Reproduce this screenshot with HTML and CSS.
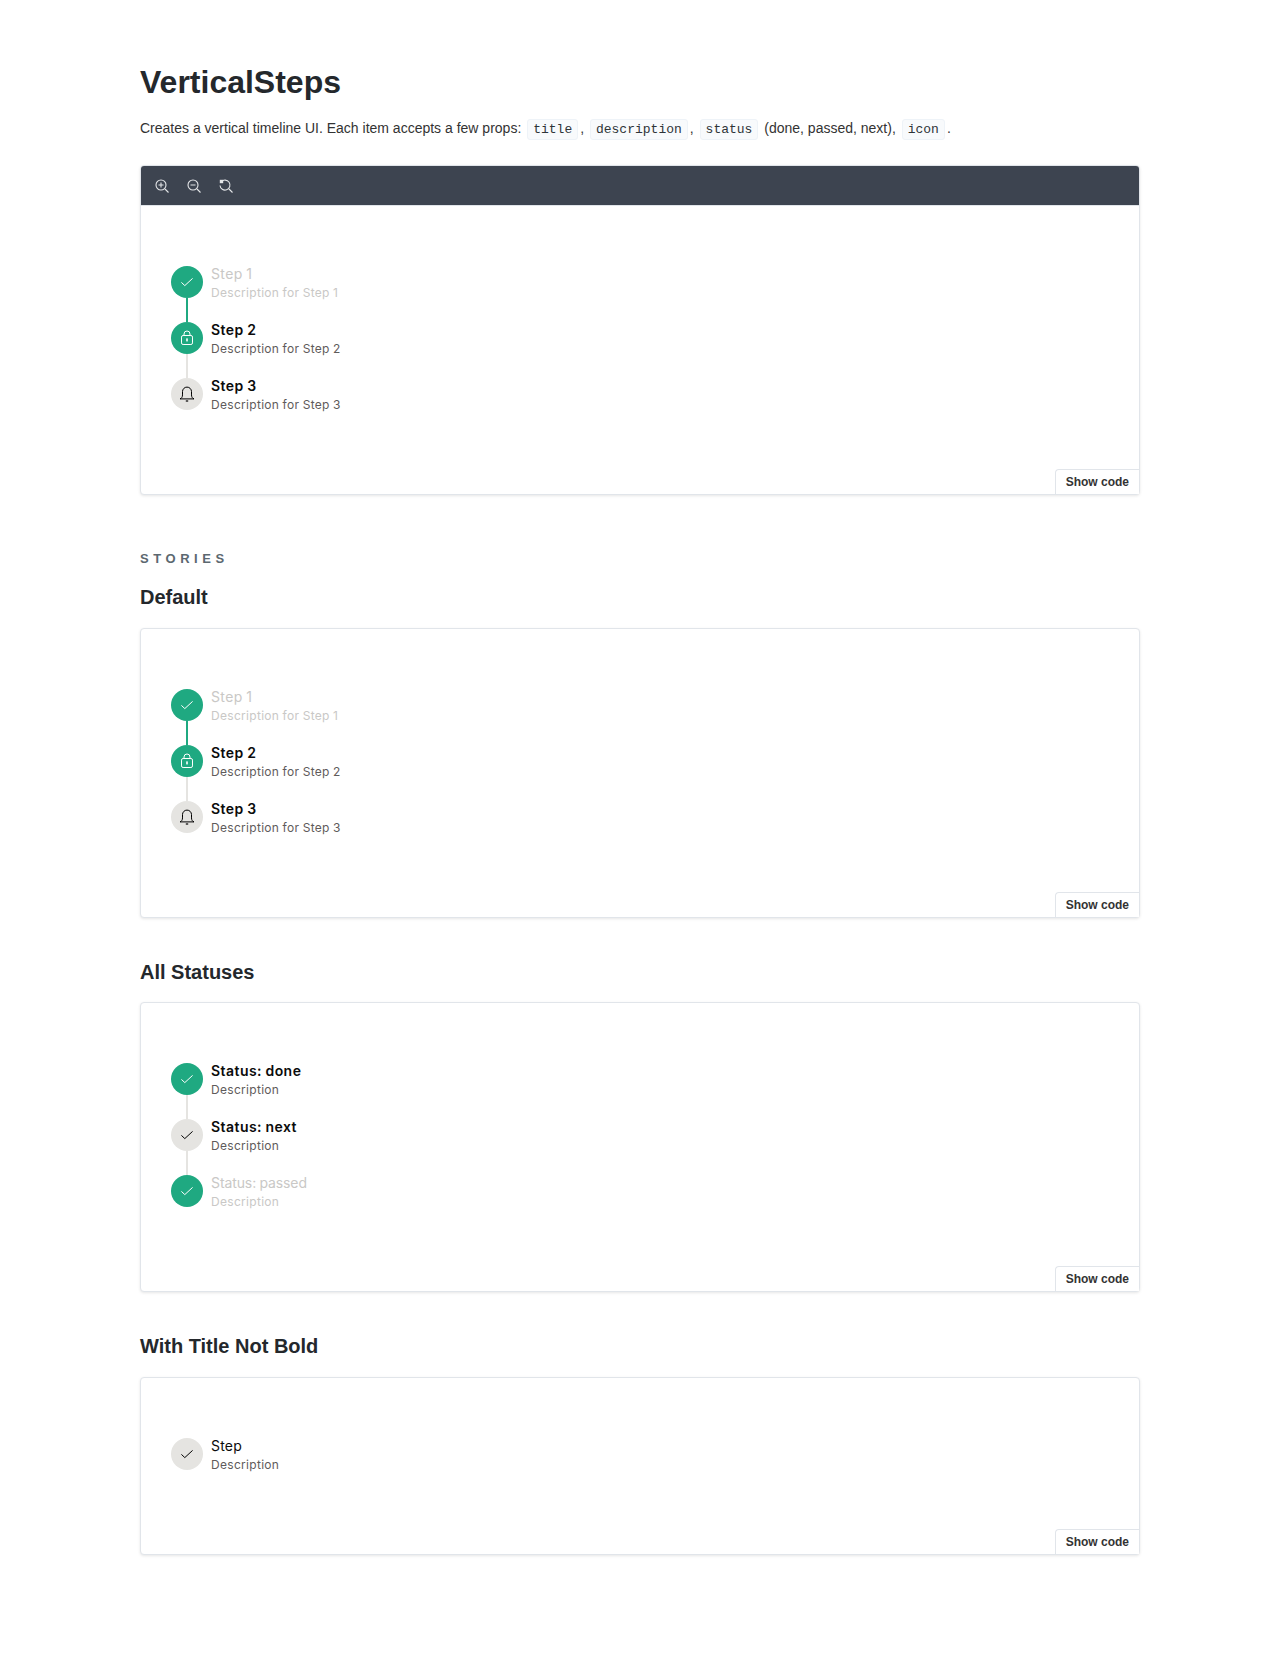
FILE: index.html
```html
<!DOCTYPE html>
<html lang="en">
<head>
    <meta charset="UTF-8">
    <title>VerticalSteps</title>
    <link rel="stylesheet" href="styles.css">
</head>
<body>
    <svg class="icon-defs" width="0" height="0" aria-hidden="true">
        <symbol id="i-check" viewBox="0 0 16 16"><path d="M2.4 8.4l3.4 3.2L13.6 4.4" fill="none" stroke="currentColor" stroke-width="1"/></symbol>
        <symbol id="i-lock" viewBox="0 0 16 16"><g fill="none" stroke="currentColor" stroke-width="1"><rect x="2.5" y="5.5" width="11" height="9" rx="1.6"/><path d="M5 5.5V4a3 3 0 0 1 6 0v1.5"/></g><rect x="7.2" y="8.4" width="1.6" height="3" fill="currentColor"/></symbol>
        <symbol id="i-bell" viewBox="0 0 16 16"><path d="M1 12.9c1.6-.7 2.5-1.9 2.5-4V5.6a4.5 4.5 0 0 1 9 0v3.3c0 2.1.9 3.3 2.5 4z" fill="none" stroke="currentColor" stroke-width="1"/><path d="M6.8 15h2.4" stroke="currentColor" stroke-width="1.2"/></symbol>
    </svg>

    <main class="docs">
        <h1>VerticalSteps</h1>
        <p class="intro">Creates a vertical timeline UI. Each item accepts a few props: <code>title</code>, <code>description</code>, <code>status</code> (done, passed, next), <code>icon</code>.</p>

        <!-- Primary preview -->
        <div class="preview">
            <div class="toolbar">
                <svg class="tool" viewBox="0 0 14 14"><circle cx="6" cy="6" r="5"/><path d="M10 10l3.5 3.5M3.5 6h5M6 3.5v5"/></svg>
                <svg class="tool" viewBox="0 0 14 14"><circle cx="6" cy="6" r="5"/><path d="M10 10l3.5 3.5M3.5 6h5"/></svg>
                <svg class="tool" viewBox="0 0 14 14"><path d="M2.2 2.8A5 5 0 1 1 1 6.5M10 10l3.5 3.5"/><path class="tool-fill" d="M.8 .8h3.4v3.4H.8z"/></svg>
            </div>
            <div class="canvas">
                <ol class="steps">
                    <li class="step passed line-done">
                        <span class="dot done"><svg><use href="#i-check"/></svg></span>
                        <div class="step-text"><div class="step-title">Step 1</div><div class="step-desc">Description for Step 1</div></div>
                    </li>
                    <li class="step">
                        <span class="dot done"><svg><use href="#i-lock"/></svg></span>
                        <div class="step-text"><div class="step-title">Step 2</div><div class="step-desc">Description for Step 2</div></div>
                    </li>
                    <li class="step">
                        <span class="dot next"><svg><use href="#i-bell"/></svg></span>
                        <div class="step-text"><div class="step-title">Step 3</div><div class="step-desc">Description for Step 3</div></div>
                    </li>
                </ol>
            </div>
            <button class="show-code">Show code</button>
        </div>

        <div class="stories-label">Stories</div>

        <h2>Default</h2>
        <div class="preview">
            <div class="canvas">
                <ol class="steps">
                    <li class="step passed line-done">
                        <span class="dot done"><svg><use href="#i-check"/></svg></span>
                        <div class="step-text"><div class="step-title">Step 1</div><div class="step-desc">Description for Step 1</div></div>
                    </li>
                    <li class="step">
                        <span class="dot done"><svg><use href="#i-lock"/></svg></span>
                        <div class="step-text"><div class="step-title">Step 2</div><div class="step-desc">Description for Step 2</div></div>
                    </li>
                    <li class="step">
                        <span class="dot next"><svg><use href="#i-bell"/></svg></span>
                        <div class="step-text"><div class="step-title">Step 3</div><div class="step-desc">Description for Step 3</div></div>
                    </li>
                </ol>
            </div>
            <button class="show-code">Show code</button>
        </div>

        <h2>All Statuses</h2>
        <div class="preview">
            <div class="canvas">
                <ol class="steps">
                    <li class="step">
                        <span class="dot done"><svg><use href="#i-check"/></svg></span>
                        <div class="step-text"><div class="step-title">Status: done</div><div class="step-desc">Description</div></div>
                    </li>
                    <li class="step">
                        <span class="dot next"><svg><use href="#i-check"/></svg></span>
                        <div class="step-text"><div class="step-title">Status: next</div><div class="step-desc">Description</div></div>
                    </li>
                    <li class="step passed">
                        <span class="dot done"><svg><use href="#i-check"/></svg></span>
                        <div class="step-text"><div class="step-title tight">Status: passed</div><div class="step-desc">Description</div></div>
                    </li>
                </ol>
            </div>
            <button class="show-code">Show code</button>
        </div>

        <h2>With Title Not Bold</h2>
        <div class="preview">
            <div class="canvas">
                <ol class="steps">
                    <li class="step not-bold">
                        <span class="dot next"><svg><use href="#i-check"/></svg></span>
                        <div class="step-text"><div class="step-title">Step</div><div class="step-desc">Description</div></div>
                    </li>
                </ol>
            </div>
            <button class="show-code">Show code</button>
        </div>
    </main>
</body>
</html>
```

FILE: styles.css
```css
/* General styles */
body {
    margin: 0;
    background-color: #ffffff;
    font-family: "Liberation Sans", Arial, sans-serif;
    color: #333333;
}

.icon-defs {
    position: absolute;
}

.docs {
    width: 1000px;
    margin: 0 auto;
    padding: 64px 0 0;
}

h1 {
    margin: 0 0 16px;
    font-size: 32px;
    line-height: 36px;
    font-weight: 700;
    color: #24282c;
}

.intro {
    margin: 0 0 25px;
    font-size: 14px;
    line-height: 24px;
    color: #333333;
}

code {
    display: inline-block;
    margin: 0 2px;
    padding: 0 5px;
    border: 1px solid #eef3f8;
    border-radius: 3px;
    background-color: #f8fafc;
    font-family: "Liberation Mono", monospace;
    font-size: 13px;
    line-height: 19px;
    color: #2e3438;
}

h2 {
    margin: 0 0 18.2px;
    font-size: 20px;
    line-height: 24px;
    font-weight: 700;
    color: #24282c;
}

.stories-label {
    margin: 56px 0 18.4px;
    font-size: 13px;
    line-height: 16px;
    font-weight: 700;
    letter-spacing: 0.35em;
    text-transform: uppercase;
    color: #5c6870;
}

/* Preview box */
.preview {
    position: relative;
    margin-bottom: 42.3px;
    border: 1px solid #e1e5ea;
    border-radius: 4px;
    background-color: #ffffff;
    box-shadow: 0 1px 3px rgba(0, 0, 0, 0.1);
}

.toolbar {
    display: flex;
    align-items: center;
    gap: 18px;
    height: 39px;
    padding: 0 14px;
    border-bottom: 1px solid #e1e5ea;
    border-radius: 3px 3px 0 0;
    background-color: #3d4450;
}

.tool {
    width: 14px;
    height: 14px;
    fill: none;
    stroke: #e4e6e8;
    stroke-width: 1.1;
}

.tool-fill {
    fill: #e4e6e8;
    stroke: none;
}

.canvas {
    padding: 60px 30px 84px;
}

/* Steps */
.steps {
    display: flex;
    flex-direction: column;
    gap: 24px;
    margin: 0;
    padding: 0;
    list-style: none;
    font-family: Inter, sans-serif;
}

.step {
    position: relative;
    display: flex;
    align-items: center;
    gap: 8px;
    height: 32px;
}

.step:not(:last-child)::after {
    content: "";
    position: absolute;
    left: 15px;
    top: 32px;
    width: 2px;
    height: 24px;
    background-color: #e5e4e1;
}

.step.line-done::after {
    background-color: #1fa981;
}

.dot {
    display: flex;
    align-items: center;
    justify-content: center;
    flex: none;
    width: 32px;
    height: 32px;
    border-radius: 50%;
}

.dot svg {
    width: 16px;
    height: 16px;
}

.dot.done {
    background-color: #1fa981;
    color: #ffffff;
}

.dot.next {
    background-color: #e5e4e1;
    color: #000000;
}

.step-text {
    padding-top: 2px;
}

.step-title {
    font-size: 14px;
    line-height: 19px;
    font-weight: 600;
    letter-spacing: 0.45px;
    word-spacing: -0.5px;
    color: #0b0b0b;
}

.step-desc {
    font-size: 12px;
    line-height: 19px;
    letter-spacing: 0.3px;
    word-spacing: -0.3px;
    color: #5f5b5b;
}

.step.not-bold .step-title {
    font-weight: 400;
    letter-spacing: 0.2px;
}

.step.passed .step-title {
    font-weight: 400;
    letter-spacing: 0.35px;
    color: #c9c8c6;
}

.step.passed .step-title.tight {
    letter-spacing: -0.1px;
}

.step.passed .step-desc {
    color: #c9c8c6;
}

/* Show code tab */
.show-code {
    position: absolute;
    right: 0;
    bottom: 0;
    padding: 4px 10px;
    border: 1px solid #e1e5ea;
    border-width: 1px 0 0 1px;
    border-radius: 4px 0 0 0;
    background-color: #ffffff;
    font-family: "Liberation Sans", Arial, sans-serif;
    font-size: 12px;
    line-height: 16px;
    font-weight: 700;
    color: #333333;
}
```
